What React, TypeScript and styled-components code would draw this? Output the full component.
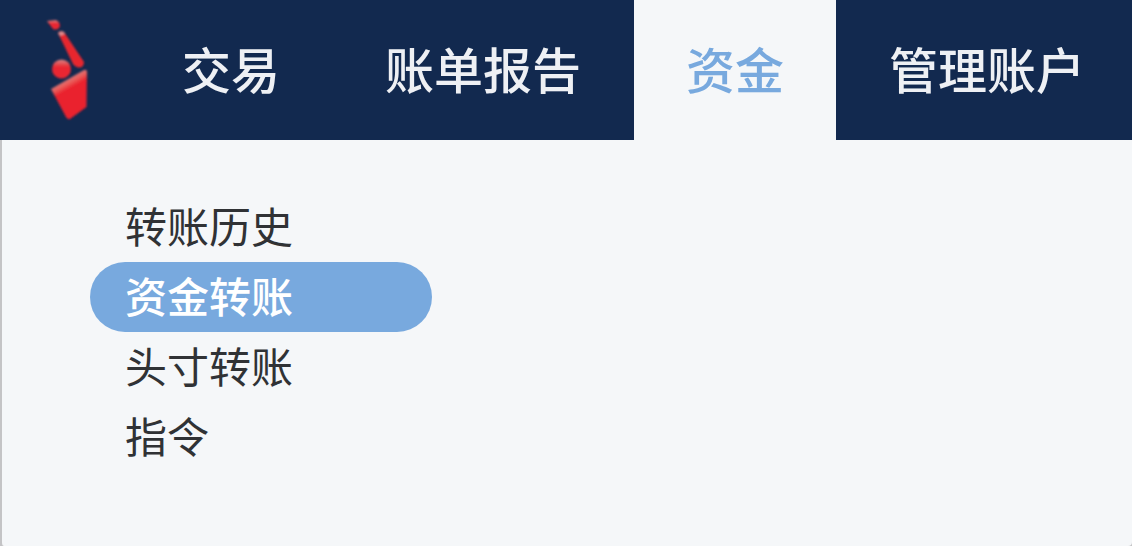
import React from "react";
import styled, { createGlobalStyle } from "styled-components";

const GlobalStyle = createGlobalStyle`
  *, *::before, *::after {
    box-sizing: border-box;
  }
  body {
    margin: 0;
    background: #c4c4c6;
    font-family: "Noto Sans CJK SC", sans-serif;
  }
`;

const Page = styled.div`
  display: flex;
  flex-direction: column;
  min-height: 100vh;
  overflow: hidden;
`;

const Header = styled.header`
  display: flex;
  align-items: stretch;
  height: 140px;
  background: #12294f;
`;

const Brand = styled.a`
  display: flex;
  flex: none;
  align-items: center;
  width: 130px;
  padding-left: 44px;
`;

const Tabs = styled.nav`
  display: flex;
  gap: 1px;
`;

const Tab = styled.a<{ $active?: boolean }>`
  display: flex;
  flex: none;
  align-items: center;
  padding: 0 52px 4px;
  font-size: 49px;
  font-weight: 500;
  line-height: 72px;
  white-space: nowrap;
  text-decoration: none;
  color: ${(p) => (p.$active ? "#78a9de" : "#eef0f4")};
  background: ${(p) => (p.$active ? "#f5f7f9" : "transparent")};
`;

const Panel = styled.main`
  flex: 1;
  padding: 52px 88px 74px;
  border-left: 2px solid #c4c4c6;
  border-radius: 0 0 4px 4px;
  background: #f5f7f9;
`;

const Menu = styled.ul`
  max-width: 342px;
  margin: 0;
  padding: 0;
  list-style: none;
`;

const MenuLink = styled.a<{ $active?: boolean }>`
  display: block;
  padding: 0 35px 4px;
  border-radius: 35px;
  font-size: 42px;
  font-weight: ${(p) => (p.$active ? 500 : 400)};
  line-height: 66px;
  text-decoration: none;
  color: ${(p) => (p.$active ? "#ffffff" : "#303235")};
  background: ${(p) => (p.$active ? "#78a9de" : "transparent")};
`;

const Logo = () => (
  <svg width="48" height="104" viewBox="0 0 48 104" aria-hidden="true">
    <defs>
      <linearGradient
        id="cone"
        gradientUnits="userSpaceOnUse"
        x1="22"
        y1="61"
        x2="27"
        y2="70"
      >
        <stop offset="0" stopColor="#d9797c" />
        <stop offset="0.5" stopColor="#ea5a58" />
        <stop offset="1" stopColor="#ea222d" />
      </linearGradient>
      <linearGradient id="ball" x1="0.5" y1="0" x2="0.5" y2="1">
        <stop offset="0" stopColor="#d98585" />
        <stop offset="0.4" stopColor="#ea2630" />
      </linearGradient>
      <filter id="soft">
        <feGaussianBlur stdDeviation="1" />
      </filter>
    </defs>
    <g filter="url(#soft)">
      <path d="M3 3 L12 2 Q16 4 16 8 Q14 13 9 11 Q6 7 3 3Z" fill="url(#ball)" />
      <path d="M14 15 Q16 12 20 14 L40 44 Q40 50 34 49.500 Q31 49 29 46 Z" fill="#e8262f" />
      <path d="M14 15 Q16 12 20 14 L21 16 L16 18 Z" fill="#dc8a8c" />
      <circle cx="17.500" cy="51" r="9.500" fill="url(#ball)" />
      <path d="M7 71 L40 52 Q43 51 43 54 L42.500 89 L26 101 Q24 102 22 99 Z" fill="url(#cone)" />
    </g>
  </svg>
);

const tabs = [
  { label: "交易" },
  { label: "账单报告" },
  { label: "资金", active: true },
  { label: "管理账户" },
];

const items = [
  { label: "转账历史" },
  { label: "资金转账", active: true },
  { label: "头寸转账" },
  { label: "指令" },
];

export default function App() {
  return (
    <>
      <GlobalStyle />
      <Page>
        <Header>
          <Brand href="#" aria-label="首页">
            <Logo />
          </Brand>
          <Tabs>
            {tabs.map((t) => (
              <Tab
                key={t.label}
                href="#"
                $active={t.active}
                aria-current={t.active ? "page" : undefined}
              >
                {t.label}
              </Tab>
            ))}
          </Tabs>
        </Header>
        <Panel>
          <Menu>
            {items.map((i) => (
              <li key={i.label}>
                <MenuLink
                  href="#"
                  $active={i.active}
                  aria-current={i.active ? "true" : undefined}
                >
                  {i.label}
                </MenuLink>
              </li>
            ))}
          </Menu>
        </Panel>
      </Page>
    </>
  );
}
